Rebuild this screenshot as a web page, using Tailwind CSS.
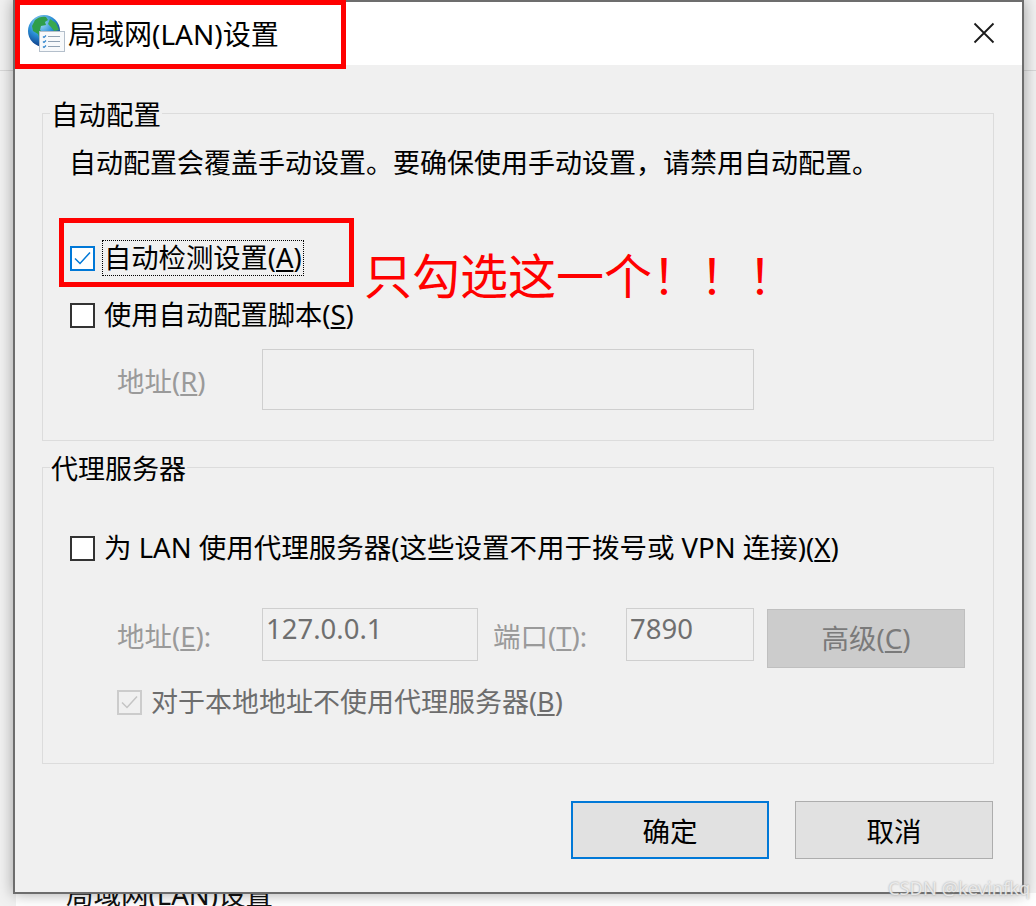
<!DOCTYPE html>
<html lang="zh-CN">
<head>
  <meta charset="UTF-8">
  <title>局域网(LAN)设置</title>
  <script src="https://cdn.jsdelivr.net/npm/@tailwindcss/browser@4"></script>
</head>
<body class="relative w-[1036px] h-[906px] overflow-hidden bg-[#f1f1f1] text-[27.5px] text-black font-['Noto_Sans','Noto_Sans_CJK_SC',sans-serif]">
  <!-- window behind the dialog -->
  <div class="absolute left-0 top-[70px] w-full h-px bg-[#d8d8d8]"></div>
  <div class="absolute left-[16px] top-[893px] w-[300px] h-[13px] bg-white"></div>
  <div class="absolute left-[316px] top-[893px] w-[720px] h-[13px] bg-white"></div>
  <div class="absolute left-[66px] top-[878px] leading-[34px] text-[#111]">局域网(LAN)设置</div>

  <!-- dialog -->
  <div class="absolute left-[13px] top-0 w-[1011px] h-[894px] flex flex-col bg-[#f0f0f0] border-2 border-[#6d6d6d] shadow-[0_0_14px_rgba(0,0,0,0.35)]">
    <div class="h-[63px] shrink-0 flex items-center bg-white pl-[12px] pr-[27px]">
      <svg class="w-[38px] h-[40px] shrink-0" viewBox="0 0 38 40">
        <defs>
          <radialGradient id="sea" cx="40%" cy="25%" r="80%">
            <stop offset="0" stop-color="#a8e0f5"/>
            <stop offset="0.5" stop-color="#2a8ed6"/>
            <stop offset="1" stop-color="#0a2f7a"/>
          </radialGradient>
        </defs>
        <circle cx="17" cy="17" r="16" fill="url(#sea)"/>
        <path d="M8 6c3-3 8-4 11-3l2 3-3 2 1 3-5 1-1 4 4 4-1 5-3 1-2-6-5-3-1-5z" fill="#2f9e4a"/>
        <path d="M23 5l6 4 3 7-5 1-3-4-3-3zM27 19l4 0-2 6-4 2 0-5z" fill="#3aa84e"/>
        <rect x="12.500" y="17.500" width="25" height="20" fill="#f7f9fb" stroke="#b4bfcb"/>
        <path d="M21 22.500h12M21 27.500h12M21 32.500h12" stroke="#8fa0b2" stroke-width="1.200"/>
        <path d="M16 22.500l1 1 2-2M16 27.500l1 1 2-2M16 32.500l1 1 2-2" fill="none" stroke="#2f84cc" stroke-width="1.200"/>
      </svg>
      <span class="ml-[3px] text-[28px] leading-[36px]">局域网(LAN)设置</span>
      <svg class="ml-auto w-[22px] h-[22px] mb-[2px]" viewBox="0 0 22 22" fill="none" stroke="#1a1a1a" stroke-width="1.800">
        <path d="M1.500 1.500l19 19M20.500 1.500l-19 19"/>
      </svg>
    </div>

    <div class="flex-1 flex flex-col pl-[27px] pr-[28px]">
      <fieldset class="h-[345px] mt-[31px] border border-[#dcdcdc] pl-[27px] pr-[20px]">
        <legend class="ml-[-20px] px-px leading-[34px]"><span class="inline-block translate-y-[2px]">自动配置</span></legend>
        <p class="text-[27px] leading-[36px] mt-[15px] ml-[-1px]">自动配置会覆盖手动设置。要确保使用手动设置，请禁用自动配置。</p>
        <label class="flex items-center h-[36px] mt-[59px]">
          <span class="w-[25px] h-[25px] shrink-0 border-[2px] border-[#0078d7] bg-white flex items-center justify-center">
            <svg class="w-[17px] h-[14px]" viewBox="0 0 17 14" fill="none" stroke="#0078d7" stroke-width="1.500"><path d="M1 7.500l5 5L16 1.500"/></svg>
          </span>
          <span class="ml-[7px] px-px border border-dotted border-black text-[27.300px] leading-[34px] h-[36px]">自动检测设置(<u>A</u>)</span>
        </label>
        <label class="flex items-center h-[36px] mt-[21px]">
          <span class="w-[25px] h-[25px] shrink-0 border-[2px] border-[#333] bg-white"></span>
          <span class="ml-[9px] text-[27.300px] leading-[36px]">使用自动配置脚本(<u>S</u>)</span>
        </label>
        <div class="flex items-center mt-[16px] text-[#9a9a9a]">
          <span class="w-[144px] ml-[47px] mt-[4px] shrink-0">地址(<u>R</u>)</span>
          <div class="w-[492px] h-[61px] ml-px border border-[#cfcfcf] bg-[#f0f0f0]"></div>
        </div>
      </fieldset>

      <fieldset class="h-[314px] mt-[9px] border border-[#dcdcdc] pl-[27px] pr-[20px]">
        <legend class="ml-[-20px] px-px leading-[34px]"><span class="inline-block translate-y-[2px] text-[27px]">代理服务器</span></legend>
        <label class="flex items-center h-[36px] mt-[46px]">
          <span class="w-[25px] h-[25px] shrink-0 border-[2px] border-[#333] bg-white"></span>
          <span class="ml-[9px] leading-[36px]">为 LAN 使用代理服务器(这些设置不用于拨号或 VPN 连接)(<u>X</u>)</span>
        </label>
        <div class="flex items-start mt-[42px] text-[#9a9a9a]">
          <span class="w-[145px] ml-[47px] mt-[8px] shrink-0">地址(<u>E</u>):</span>
          <div class="w-[216px] h-[53px] border border-[#cfcfcf] pl-[3px] text-[#6f6f6f] leading-[40px]">127.0.0.1</div>
          <span class="w-[148px] pl-[15px] mt-[8px] shrink-0">端口(<u>T</u>):</span>
          <div class="w-[128px] h-[53px] border border-[#cfcfcf] pl-[3px] text-[#6f6f6f] leading-[40px]">7890</div>
          <div class="w-[198px] h-[59px] ml-[13px] mt-px flex items-center justify-center bg-[#cccccc] border border-[#bfbfbf] text-[#7a7a7a]">高级(<u>C</u>)</div>
        </div>
        <label class="flex items-center h-[36px] mt-[16px] ml-[47px] text-[#6d6d6d]">
          <span class="w-[25px] h-[25px] shrink-0 border-[2px] border-[#cccccc] bg-[#f0f0f0] flex items-center justify-center">
            <svg class="w-[17px] h-[14px]" viewBox="0 0 17 14" fill="none" stroke="#c4c4c4" stroke-width="1.500"><path d="M1 7.500l5 5L16 1.500"/></svg>
          </span>
          <span class="ml-[9px] text-[27px] leading-[36px]">对于本地地址不使用代理服务器(<u>B</u>)</span>
        </label>
      </fieldset>

      <div class="flex justify-end gap-[26px] mt-[37px] mr-[1px]">
        <button class="w-[198px] h-[58px] pt-[4px] bg-[#e1e1e1] border-2 border-[#0078d7]">确定</button>
        <button class="w-[198px] h-[58px] pt-[4px] bg-[#e1e1e1] border border-[#adadad]">取消</button>
      </div>
    </div>
  </div>

  <!-- red annotations drawn over the screenshot -->
  <div class="absolute left-[15px] top-0 w-[331px] h-[69px] border-[5px] border-[#ff0000]"></div>
  <div class="absolute left-[59px] top-[218px] w-[295px] h-[69px] border-[5px] border-[#ff0000]"></div>
  <div class="absolute left-[364px] top-[244px] text-[48px] leading-[64px] text-[#ff0000] whitespace-nowrap">只勾选这一个！！！</div>
  <div class="absolute left-[888px] top-[876px] text-[18.300px] leading-[24px] text-[#f2f2f2]/85 [text-shadow:0_0_2px_#999] whitespace-nowrap">CSDN @kevinfkq</div>
</body>
</html>
